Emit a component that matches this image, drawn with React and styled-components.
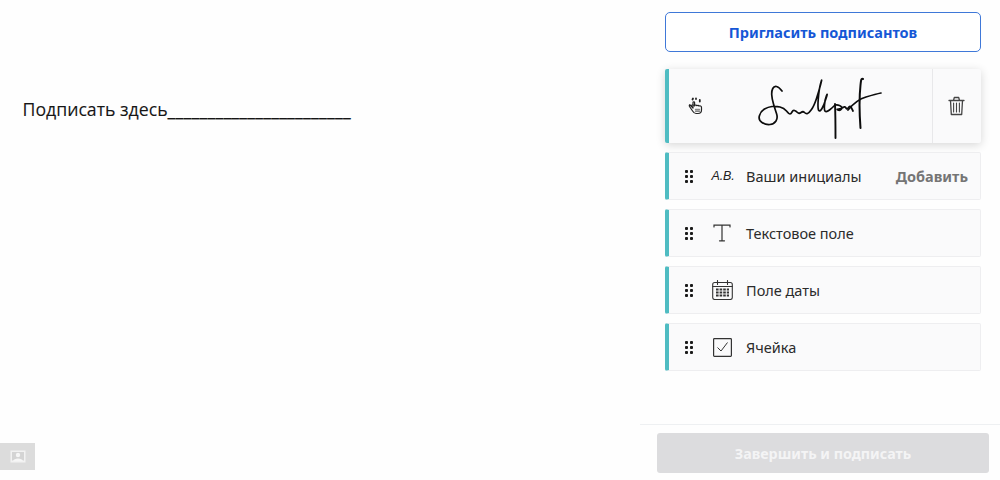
import React from "react";
import styled, { createGlobalStyle } from "styled-components";

const Global = createGlobalStyle`
  html, body { margin: 0; padding: 0; background: #fefefe; }
  body { font-family: "Noto Sans", "Open Sans", sans-serif; }
`;

const Page = styled.div`
  width: 1000px;
  height: 480px;
  display: flex;
  overflow: hidden;
  background: #fefefe;
`;

const Doc = styled.main`
  flex: 1;
  display: flex;
  flex-direction: column;
  justify-content: space-between;
  padding: 97px 0 10px 0;
`;

const DocLine = styled.p`
  margin: 0 0 0 22.5px;
  font-family: "Open Sans", "Liberation Sans", sans-serif;
  font-size: 17.7px;
  line-height: 25px;
  color: #161616;
  white-space: nowrap;
  -webkit-text-stroke: 0.1px #161616;
`;

const Blank = styled.span`
  letter-spacing: 0.22px;
`;

const PreviewButton = styled.button`
  width: 35px;
  height: 27px;
  padding: 0;
  border: 0;
  background: #dcdcdc;
  display: flex;
  align-items: center;
  justify-content: center;
`;

const Side = styled.aside`
  width: 360px;
  height: 480px;
  display: flex;
  flex-direction: column;
`;

const List = styled.div`
  flex: 1;
  display: flex;
  flex-direction: column;
  padding: 12px 19px 0 25px;
`;

const Invite = styled.button`
  height: 40px;
  box-sizing: border-box;
  border: 1px solid #3f78d8;
  border-radius: 5px;
  background: #fff;
  color: #1557d6;
  font: 700 14.5px "Noto Sans", sans-serif;
  margin-bottom: 17px;
`;

const SigCard = styled.div`
  height: 74px;
  display: flex;
  align-items: stretch;
  background: #fafafb;
  border-left: 4px solid #4fbcc2;
  border-radius: 2px;
  box-shadow: 0 2px 10px rgba(0, 0, 0, 0.16);
  margin-bottom: 9px;
`;

const HandCell = styled.div`
  width: 50px;
  display: flex;
  align-items: center;
  justify-content: center;
  padding-left: 4px;
  box-sizing: border-box;
`;

const SigCell = styled.div`
  flex: 1;
  display: flex;
  align-items: center;
  justify-content: center;
  padding-right: 20px;
  box-sizing: border-box;
`;

const TrashCell = styled.div`
  width: 49px;
  border-left: 1px solid #e8e8ea;
  display: flex;
  align-items: center;
  justify-content: center;
  padding-right: 1px;
  box-sizing: border-box;
`;

const Row = styled.div`
  height: 48px;
  box-sizing: border-box;
  display: flex;
  align-items: center;
  background: #fafafb;
  border: 1px solid #eeeef0;
  border-left: 4px solid #4fbcc2;
  border-radius: 2px;
  margin-bottom: 9px;
  padding-right: 12px;
`;

const Grip = styled.div`
  width: 8px;
  margin-left: 16px;
  display: grid;
  grid-template-columns: 3px 3px;
  grid-auto-rows: 3px;
  gap: 2px 2px;
  justify-content: space-between;
  & > i { display: block; background: #1a1a1a; border-radius: 30%; }
`;

const IconSlot = styled.div`
  width: 22px;
  height: 22px;
  margin-left: 18px;
  display: flex;
  align-items: center;
  justify-content: center;
`;

const InitialsText = styled.span`
  font: italic 12.5px "Liberation Sans", sans-serif;
  letter-spacing: -0.2px;
  color: #222;
  white-space: nowrap;
  padding-left: 2px;
`;

const Label = styled.span`
  margin-left: 13px;
  flex: 1;
  font-size: 14.5px;
  color: #2b2b2b;
`;

const AddLink = styled.span`
  font-size: 14.5px;
  font-weight: 700;
  color: #757575;
`;

const Footer = styled.footer`
  height: 56px;
  box-sizing: border-box;
  border-top: 1px solid #eef0f2;
  padding: 8px 11px 0 17px;
`;

const Finish = styled.button`
  width: 100%;
  height: 40px;
  border: 0;
  border-radius: 3px;
  background: #dcdcde;
  color: #f4f4f5;
  font: 700 14.3px "Noto Sans", sans-serif;
`;

const smooth = (pts) => {
  let d = `M${pts[0][0]} ${pts[0][1]}`;
  for (let i = 1; i < pts.length - 1; i++) {
    const [x, y] = pts[i];
    const [nx, ny] = pts[i + 1];
    d += ` Q${x} ${y} ${(x + nx) / 2} ${(y + ny) / 2}`;
  }
  const last = pts[pts.length - 1];
  return `${d} L${last[0]} ${last[1]}`;
};

const mainStroke = smooth([
  [41, 20], [38, 16], [33, 15], [30.5, 20], [31, 28], [34, 38], [37, 47], [33, 53], [25, 54], [17, 49],
  [20, 40], [27, 36], [35, 35], [43, 37], [48, 43], [50, 43], [52, 39], [55, 40], [58, 43], [62, 40],
  [65, 43], [68, 42], [73, 35], [78, 20], [81.5, 6], [78, 18], [76.5, 38], [79, 41], [83, 34], [87, 21],
  [84, 28], [83, 40], [86, 41], [91, 37], [95, 33], [102, 36], [99, 40], [95, 38], [100, 38], [104, 35],
  [106, 39], [109, 34], [112, 40],
]);

const Signature = () => (
  <svg width="150" height="70" viewBox="0 0 150 70" fill="none" stroke="#0c0c0c" strokeWidth="1.7" strokeLinecap="round" strokeLinejoin="round">
    <path d={mainStroke} />
    <path d="M94 33 C94.5 45 94.5 56 94.5 67" strokeWidth="1.9" />
    <path d="M107 39 C112 33 118 28 125 26 C130 24.5 135 23 140 22" />
    <path d="M122 8 C120 7 120 10 119.5 14 C118 28 118.5 44 119.5 57" strokeWidth="2" />
  </svg>
);

const Hand = () => (
  <svg width="16" height="18" viewBox="0 0 16 18" fill="none" stroke="#222" strokeWidth="1.2" strokeLinecap="round" strokeLinejoin="round">
    <path d="M2 8 L5 11 V5.5 C5 4.5 6.6 4.5 6.6 5.5 V9 M6.6 8.5 C7.5 7.7 8.5 8 8.7 8.7 C9.7 8 10.6 8.4 10.8 9 C12 8.6 13.5 9 13.5 10.5 V13 C13.5 15.5 12 16.5 10 16.5 H8 C6.3 16.5 5.5 15.5 4.6 14 L1.5 9.5 C1 8.5 1.5 7.6 2 8 Z" />
    <path d="M7.5 12.5 H11.5 M7.5 14.2 H11.5" stroke="#888" strokeWidth="1.4" />
    <path d="M4.5 2.5 L5 1.5 M8 2 L8 1.5 M11.8 3 V4.5" strokeWidth="1.8" />
  </svg>
);

const Trash = () => (
  <svg width="17" height="20" viewBox="0 0 17 20" fill="none" stroke="#444" strokeWidth="1.1" strokeLinecap="round" strokeLinejoin="round">
    <path d="M1 4.5 H16 M5.5 4.5 L6.3 1.5 H10.7 L11.5 4.5 M2.5 4.5 L3.3 18.5 H13.7 L14.5 4.5" strokeWidth="1.3" />
    <path d="M5.6 7 V16 M8.5 7 V16 M11.4 7 V16" />
  </svg>
);

const Initials = () => <InitialsText>A.B.</InitialsText>;

const TextIcon = () => (
  <svg width="18" height="18" viewBox="0 0 18 18" fill="none" stroke="#333" strokeWidth="1.2" strokeLinecap="round">
    <path d="M1 3 V1.2 H17 V3 M9 1.2 V16.8 M6.5 16.8 H11.5" />
  </svg>
);

const CalendarIcon = () => (
  <svg width="21" height="20" viewBox="0 0 21 20" fill="none" stroke="#333" strokeWidth="1.1" strokeLinecap="round">
    <rect x="0.7" y="2.5" width="19.6" height="17" rx="2" />
    <path d="M0.7 6.5 H20.3 M5.5 0.5 V4.5 M15.5 0.5 V4.5" />
    <path d="M4 9.5 H17 M4 12.5 H17 M4 15.5 H17" strokeWidth="1.8" strokeDasharray="2.6 1" strokeLinecap="butt" />
  </svg>
);

const CheckIcon = () => (
  <svg width="19" height="19" viewBox="0 0 19 19" fill="none" stroke="#333" strokeWidth="1.2">
    <rect x="0.6" y="0.6" width="17.8" height="17.8" rx="0.8" />
    <path d="M4.5 9.5 L8 13 L14.5 4.5" strokeWidth="1" />
  </svg>
);

const PictureIcon = () => (
  <svg width="16" height="13" viewBox="0 0 16 13" fill="none">
    <rect x="0.5" y="0.5" width="15" height="12" fill="#f2f2f2" />
    <rect x="2" y="2" width="12" height="8.5" fill="#d4d4d4" />
    <circle cx="8" cy="5" r="2.2" fill="#f6f6f6" />
    <path d="M3 11 C3.5 7.5 12.5 7.5 13 11 Z" fill="#f6f6f6" />
  </svg>
);

const GripDots = () => (
  <Grip>
    {Array.from({ length: 6 }, (_, i) => <i key={i} />)}
  </Grip>
);

const rows = [
  { id: "init", icon: <Initials />, label: "Ваши инициалы", action: "Добавить" },
  { id: "text", icon: <TextIcon />, label: "Текстовое поле" },
  { id: "date", icon: <CalendarIcon />, label: "Поле даты" },
  { id: "check", icon: <CheckIcon />, label: "Ячейка" },
];

export default function App() {
  return (
    <Page>
      <Global />
      <Doc>
        <DocLine>Подписать здесь<Blank>_______________________</Blank></DocLine>
        <PreviewButton aria-label="Просмотр"><PictureIcon /></PreviewButton>
      </Doc>
      <Side>
        <List>
          <Invite>Пригласить подписантов</Invite>
          <SigCard>
            <HandCell><Hand /></HandCell>
            <SigCell><Signature /></SigCell>
            <TrashCell><Trash /></TrashCell>
          </SigCard>
          {rows.map((r) => (
            <Row key={r.id}>
              <GripDots />
              <IconSlot>{r.icon}</IconSlot>
              <Label>{r.label}</Label>
              {r.action && <AddLink>{r.action}</AddLink>}
            </Row>
          ))}
        </List>
        <Footer>
          <Finish disabled>Завершить и подписать</Finish>
        </Footer>
      </Side>
    </Page>
  );
}
